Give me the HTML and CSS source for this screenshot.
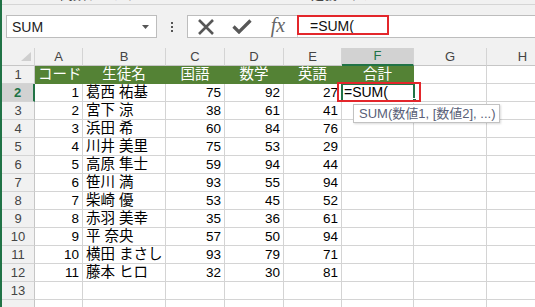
FILE: index.html
```html
<!DOCTYPE html>
<html lang="ja">
<head>
  <meta charset="UTF-8" />
  <title>SUM</title>
  <link rel="stylesheet" href="styles.css">
</head>
<body>

  <div class="ribbon-edge"><span>関数ライブラリ</span><span class="second">定義された</span></div>

  <div class="formula-row">
    <div class="name-box">
      <span>SUM</span>
      <svg width="7" height="4" viewBox="0 0 7 4"><polygon points="0,0 7,0 3.5,4" fill="#555"/></svg>
    </div>
    <div class="grip"><i></i><i></i><i></i></div>
    <div class="formula-bar">
      <div class="fb-btn">
        <svg width="18" height="16" viewBox="0 0 18 16"><path d="M2 1 L16 15 M16 1 L2 15" stroke="#575757" stroke-width="2.6" fill="none"/></svg>
      </div>
      <div class="fb-btn">
        <svg width="20" height="15" viewBox="0 0 20 15"><path d="M1.5 7.5 L7 13 L18.5 1.5" stroke="#575757" stroke-width="3.2" fill="none"/></svg>
      </div>
      <div class="fb-btn fx">fx</div>
      <div class="fb-input">=SUM(</div>
      <div class="mark mark-formula"></div>
    </div>
  </div>

  <div class="sheet">
    <div class="ch corner"><svg width="10" height="9" viewBox="0 0 10 9"><polygon points="0,9 10,9 10,0" fill="#cfcfcf"/></svg></div>
    <div class="ch">A</div><div class="ch">B</div><div class="ch">C</div><div class="ch">D</div>
    <div class="ch">E</div><div class="ch sel">F</div><div class="ch">G</div><div class="ch">H</div>

    <div class="rh">1</div>
    <div class="c hd">コード</div><div class="c hd">生徒名</div><div class="c hd">国語</div>
    <div class="c hd">数学</div><div class="c hd">英語</div><div class="c hd">合計</div>
    <div class="c"></div><div class="c"></div>

    <div class="rh sel">2</div>
    <div class="c num">1</div><div class="c txt">葛西 祐基</div><div class="c num">75</div>
    <div class="c num">92</div><div class="c num">27</div>
    <div class="c edit">=SUM(
      <span class="cursor-box"></span><span class="fill-handle"></span>
      <span class="mark mark-cell"></span>
      <span class="tip">SUM(数値1, [数値2], ...)</span>
    </div>
    <div class="c"></div><div class="c"></div>

    <div class="rh">3</div>
    <div class="c num">2</div><div class="c txt">宮下 涼</div><div class="c num">38</div>
    <div class="c num">61</div><div class="c num">41</div><div class="c"></div><div class="c"></div><div class="c"></div>

    <div class="rh">4</div>
    <div class="c num">3</div><div class="c txt">浜田 希</div><div class="c num">60</div>
    <div class="c num">84</div><div class="c num">76</div><div class="c"></div><div class="c"></div><div class="c"></div>

    <div class="rh">5</div>
    <div class="c num">4</div><div class="c txt">川井 美里</div><div class="c num">75</div>
    <div class="c num">53</div><div class="c num">29</div><div class="c"></div><div class="c"></div><div class="c"></div>

    <div class="rh">6</div>
    <div class="c num">5</div><div class="c txt">高原 隼士</div><div class="c num">59</div>
    <div class="c num">94</div><div class="c num">44</div><div class="c"></div><div class="c"></div><div class="c"></div>

    <div class="rh">7</div>
    <div class="c num">6</div><div class="c txt">笹川 満</div><div class="c num">93</div>
    <div class="c num">55</div><div class="c num">94</div><div class="c"></div><div class="c"></div><div class="c"></div>

    <div class="rh">8</div>
    <div class="c num">7</div><div class="c txt">柴崎 優</div><div class="c num">53</div>
    <div class="c num">45</div><div class="c num">52</div><div class="c"></div><div class="c"></div><div class="c"></div>

    <div class="rh">9</div>
    <div class="c num">8</div><div class="c txt">赤羽 美幸</div><div class="c num">35</div>
    <div class="c num">36</div><div class="c num">61</div><div class="c"></div><div class="c"></div><div class="c"></div>

    <div class="rh">10</div>
    <div class="c num">9</div><div class="c txt">平 奈央</div><div class="c num">57</div>
    <div class="c num">50</div><div class="c num">94</div><div class="c"></div><div class="c"></div><div class="c"></div>

    <div class="rh">11</div>
    <div class="c num">10</div><div class="c txt">横田 まさし</div><div class="c num">93</div>
    <div class="c num">79</div><div class="c num">71</div><div class="c"></div><div class="c"></div><div class="c"></div>

    <div class="rh">12</div>
    <div class="c num">11</div><div class="c txt">藤本 ヒロ</div><div class="c num">32</div>
    <div class="c num">30</div><div class="c num">81</div><div class="c"></div><div class="c"></div><div class="c"></div>

    <div class="rh">13</div>
    <div class="c"></div><div class="c"></div><div class="c"></div><div class="c"></div>
    <div class="c"></div><div class="c"></div><div class="c"></div><div class="c"></div>

    <div class="rh"></div>
    <div class="c"></div><div class="c"></div><div class="c"></div><div class="c"></div>
    <div class="c"></div><div class="c"></div><div class="c"></div><div class="c"></div>
  </div>

</body>
</html>
```

FILE: styles.css
```css
/* Excel 風の画面 535x307 */
* {
  box-sizing: border-box;
}

body {
  margin: 0;
  width: 535px;
  height: 307px;
  overflow: hidden;
  border-left: 2px solid #217346;
  background: #f1f1f1;
  font-family: "Liberation Sans", "Noto Sans CJK JP", sans-serif;
  color: #000;
}

.ribbon-edge {
  height: 5px;
  border-bottom: 1px solid #d5d5d5;
  overflow: hidden;
  display: flex;
  padding-left: 58px;
}

.ribbon-edge span {
  display: block;
  font-size: 13px;
  line-height: 13px;
  margin-top: -12px;
  color: #444;
}

.ribbon-edge .second {
  margin-left: 160px;
}

.formula-row {
  display: flex;
  align-items: center;
  height: 23px;
  margin-top: 10px;
  padding-left: 4px;
}

.name-box {
  width: 151px;
  height: 23px;
  flex: none;
  border: 1px solid #bdbdbd;
  background: #fff;
  display: flex;
  align-items: center;
  justify-content: space-between;
  padding: 0 7px 0 5px;
  font-size: 14px;
  color: #222;
}

.grip {
  width: 30px;
  flex: none;
  display: flex;
  flex-direction: column;
  align-items: center;
  gap: 2px;
}

.grip i {
  display: block;
  width: 2px;
  height: 2px;
  background: #555;
}

.formula-bar {
  flex: 1;
  height: 23px;
  border: 1px solid #bdbdbd;
  border-right: none;
  background: #fff;
  display: flex;
  align-items: center;
  position: relative;
}

.fb-btn {
  width: 36px;
  height: 21px;
  display: flex;
  align-items: center;
  justify-content: center;
}

.fb-btn.fx {
  font-family: "Liberation Serif", serif;
  font-style: italic;
  font-size: 20px;
  color: #666;
  padding-bottom: 2px;
}

.fb-input {
  flex: 1;
  height: 21px;
  border-left: 1px solid #d4d4d4;
  margin-left: 1px;
  padding-left: 12px;
  font-size: 14px;
  line-height: 21px;
  color: #111;
}

.mark {
  position: absolute;
  border: 2px solid #e3262b;
}

.mark-formula {
  left: 109px;
  top: -1px;
  width: 92px;
  height: 20px;
}

.sheet {
  margin-top: 10px;
  display: grid;
  grid-template-columns: 33px 48px 83px 59px 59px 58px 72px 73px 72px;
  grid-auto-rows: 18px;
  background: #fff;
}

.ch {
  background: #f1f1f1;
  color: #444;
  text-align: center;
  font-size: 13px;
  line-height: 17px;
  border-right: 1px solid #d4d4d4;
  border-bottom: 1px solid #c6c6c6;
}

.ch.sel {
  background: #d2d2d2;
  color: #217346;
  border-bottom: 2px solid #217346;
  line-height: 16px;
}

.corner {
  display: flex;
  justify-content: flex-end;
  align-items: flex-end;
  padding: 0 3px 4px 0;
}

.rh {
  background: #f1f1f1;
  color: #444;
  text-align: center;
  font-size: 13px;
  line-height: 17px;
  border-right: 1px solid #c6c6c6;
  border-bottom: 1px solid #d4d4d4;
}

.rh.sel {
  background: #d2d2d2;
  color: #217346;
  font-weight: bold;
  border-right: 2px solid #217346;
}

.c {
  border-right: 1px solid #d4d4d4;
  border-bottom: 1px solid #d4d4d4;
  line-height: 17px;
  font-size: 13.5px;
  white-space: nowrap;
  padding: 0 3px;
}

.num {
  text-align: right;
  overflow: hidden;
}

.txt {
  font-size: 14.5px;
  overflow: hidden;
}

.hd {
  background: #548235;
  border-color: #548235;
  color: #fff;
  text-align: center;
  font-size: 14.5px;
}

.edit {
  position: relative;
  font-size: 14px;
  padding-left: 2px;
}

.cursor-box {
  position: absolute;
  left: -1px;
  top: -1px;
  width: 74px;
  height: 19px;
  border: 2px solid #217346;
}

.fill-handle {
  position: absolute;
  left: 70px;
  top: 14px;
  width: 5px;
  height: 5px;
  background: #217346;
  border: 1px solid #fff;
}

.mark-cell {
  left: -5px;
  top: -2px;
  width: 84px;
  height: 20px;
}

.tip {
  position: absolute;
  z-index: 2;
  left: 11px;
  top: 20px;
  width: 147px;
  height: 19px;
  background: #fff;
  border: 1px solid #c2c2c2;
  box-shadow: 1px 1px 2px rgba(0, 0, 0, 0.15);
  font-size: 13px;
  line-height: 17px;
  padding-left: 5px;
  color: #5a5f78;
}
```
